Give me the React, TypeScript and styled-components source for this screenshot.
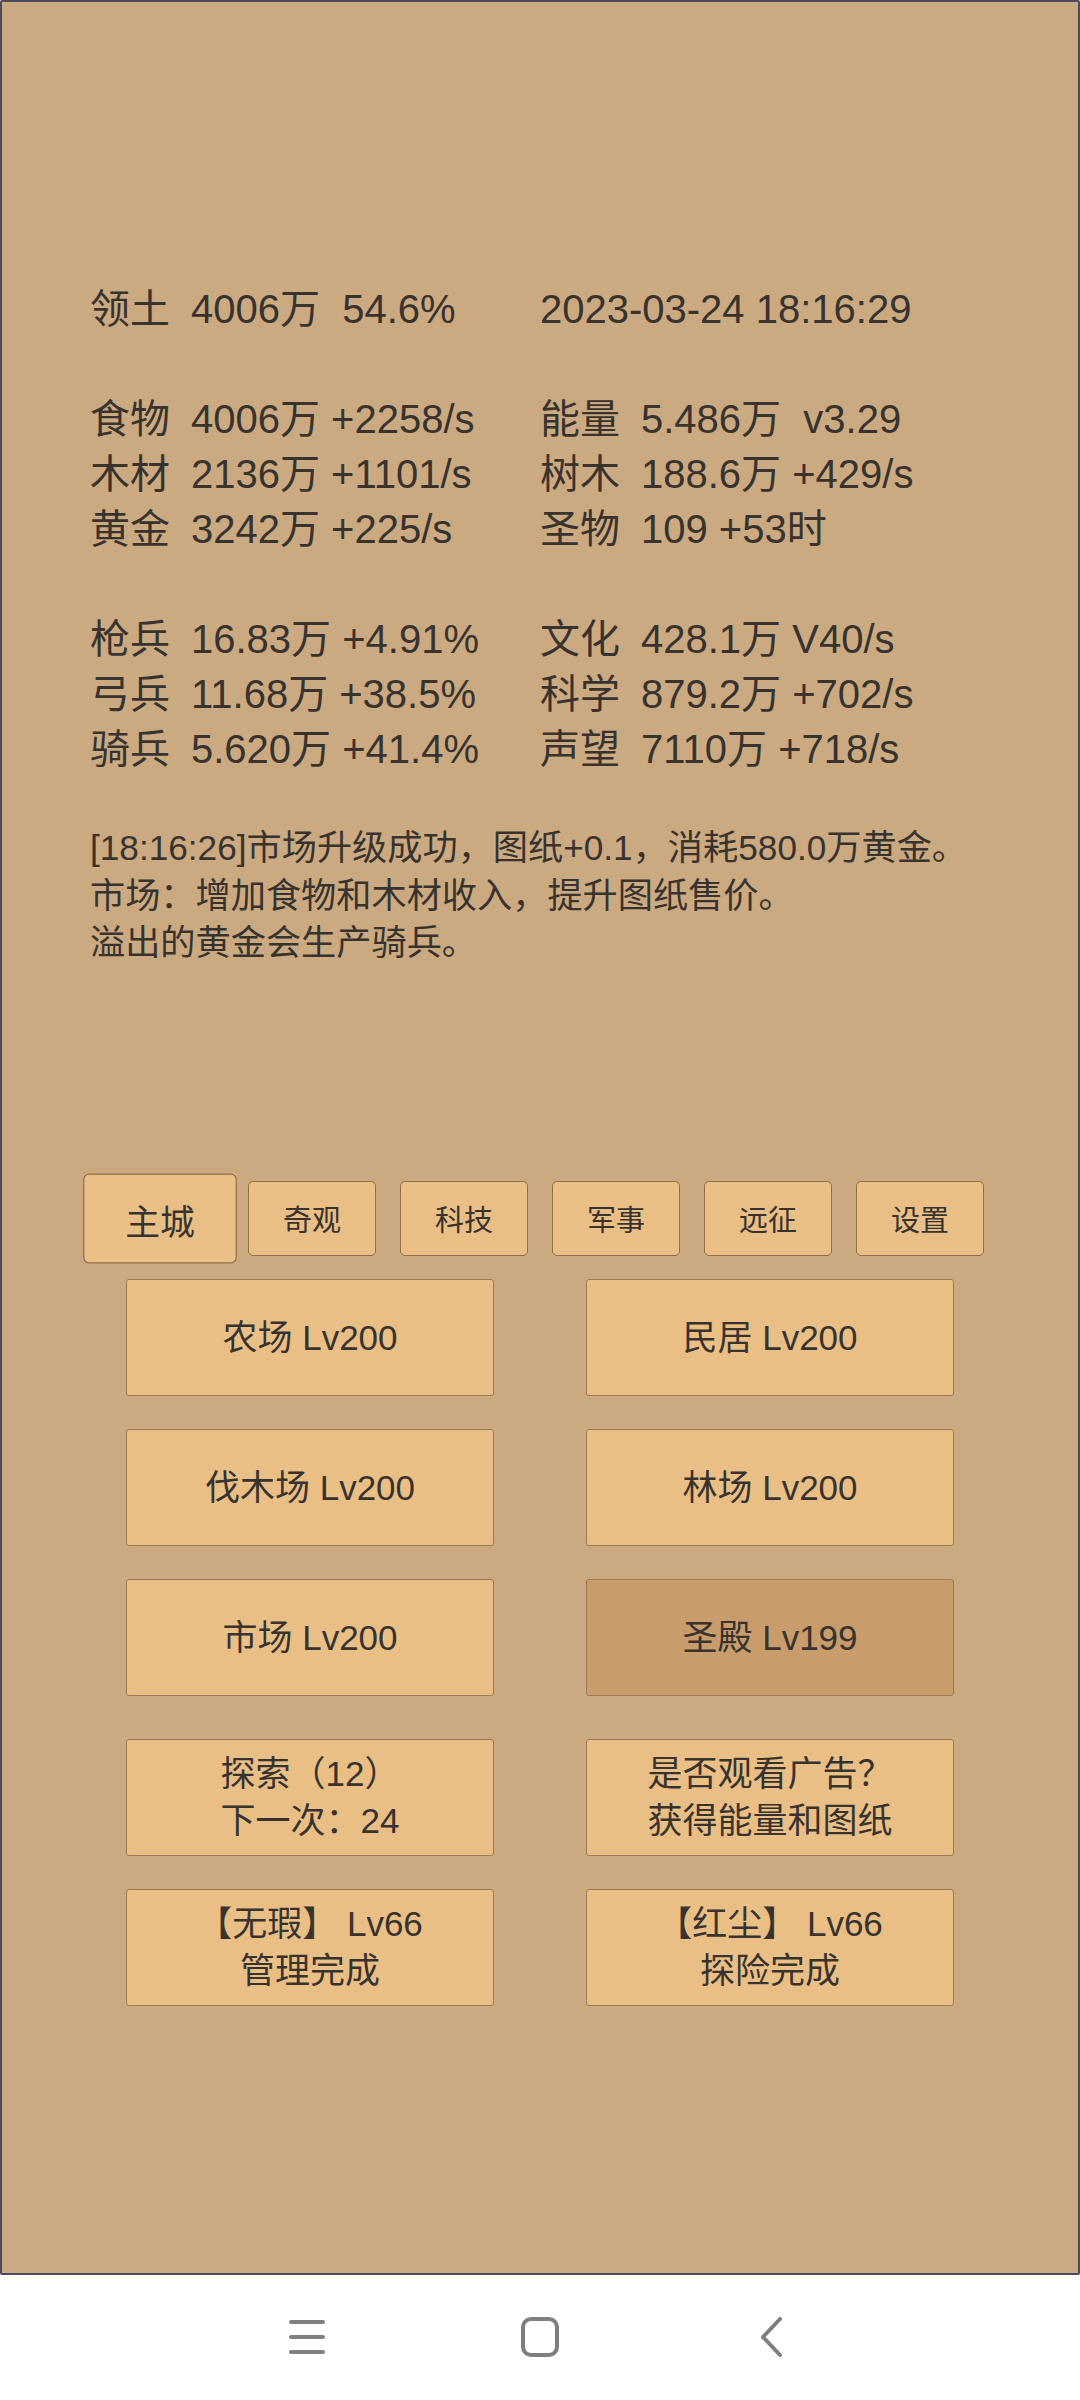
import React from "react";
import styled, {createGlobalStyle} from 'styled-components'

const GlobalStyle = createGlobalStyle`
    body {
        margin: 0;
        background: #ffffff;
        font-family: "Liberation Sans", "Noto Sans CJK SC", sans-serif;
    }
`

const Screen = styled.div`
    width: 1080px;
    height: 2400px;
    display: flex;
    flex-direction: column;
    background: #ffffff;
`

const Panel = styled.div`
    height: 2275px;
    box-sizing: border-box;
    border: 2px solid #4b4b5d;
    border-radius: 2px;
    background: #cbaa81;
    color: #38332e;
    padding-top: 280px;
    display: flex;
    flex-direction: column;
`

const Stats = styled.div`
    padding-left: 88px;
    font-size: 40px;
    line-height: 55px;
`

const StatRow = styled.div`
    display: grid;
    grid-template-columns: 450px 1fr;
    height: 55px;
    white-space: pre;
`

const Blank = styled.div`
    height: 55px;
`

const Cell = styled.div`
    display: flex;
    white-space: pre;
`

const Label = styled.span`
    width: 101px;
    flex: none;
`

const Log = styled.div`
    margin-top: 47px;
    padding-left: 88px;
    font-size: 35.2px;
    line-height: 47.5px;
`

const Tabs = styled.div`
    margin-top: 214px;
    display: flex;
    justify-content: center;
    gap: 24px;
`

const Tab = styled.div<{ active?: boolean }>`
    width: 128px;
    height: 75px;
    box-sizing: border-box;
    background: #eabf86;
    border: 1.5px solid #8f6d48;
    border-radius: 5px;
    display: flex;
    align-items: center;
    justify-content: center;
    font-size: 29px;
    transform: ${props => props.active ? `scale(1.2)` : `none`};
`

const Grid = styled.div<{ gapTop: number }>`
    margin: ${props => props.gapTop}px 78px 0;
    display: grid;
    grid-template-columns: 460px 460px;
    row-gap: 33px;
`

const Building = styled.div<{ busy?: boolean }>`
    width: 368px;
    height: 117px;
    margin: 0 auto;
    box-sizing: border-box;
    background: ${props => props.busy ? `#c99d6b` : `#eabf86`};
    border: 1.5px solid #9b7a55;
    border-radius: 3px;
    display: flex;
    flex-direction: column;
    align-items: center;
    justify-content: center;
    text-align: center;
    font-size: 35px;
    line-height: 47px;
`

const NavBar = styled.div`
    flex: 1;
    display: flex;
    align-items: center;
    justify-content: center;
    gap: 195px;
    padding-bottom: 2px;
`

const NavIcon = styled.svg`
    width: 40px;
    height: 40px;
    display: block;
`

const stats = [
    [["食物", "4006万 +2258/s"], ["能量", "5.486万  v3.29"]],
    [["木材", "2136万 +1101/s"], ["树木", "188.6万 +429/s"]],
    [["黄金", "3242万 +225/s"], ["圣物", "109 +53时"]],
    null,
    [["枪兵", "16.83万 +4.91%"], ["文化", "428.1万 V40/s"]],
    [["弓兵", "11.68万 +38.5%"], ["科学", "879.2万 +702/s"]],
    [["骑兵", "5.620万 +41.4%"], ["声望", "7110万 +718/s"]],
]

const tabs = ["主城", "奇观", "科技", "军事", "远征", "设置"]

const buildings = [
    {name: "农场 Lv200"}, {name: "民居 Lv200"},
    {name: "伐木场 Lv200"}, {name: "林场 Lv200"},
    {name: "市场 Lv200"}, {name: "圣殿 Lv199", busy: true},
]

export default function App() {
    return (
        <Screen>
            <GlobalStyle/>
            <Panel>
                <Stats>
                    <StatRow>
                        <Cell><Label>领土</Label>4006万  54.6%</Cell>
                        <Cell>2023-03-24 18:16:29</Cell>
                    </StatRow>
                    <Blank/>
                    {stats.map((row, i) => row ? (
                        <StatRow key={i}>
                            {row.map(c => (
                                <Cell key={c[0]}><Label>{c[0]}</Label>{c[1]}</Cell>
                            ))}
                        </StatRow>
                    ) : <Blank key={i}/>)}
                </Stats>
                <Log>
                    <div>[18:16:26]市场升级成功，图纸+0.1，消耗580.0万黄金。</div>
                    <div>市场：增加食物和木材收入，提升图纸售价。</div>
                    <div>溢出的黄金会生产骑兵。</div>
                </Log>
                <Tabs>
                    {tabs.map((t, i) => <Tab key={t} active={i === 0}>{t}</Tab>)}
                </Tabs>
                <Grid gapTop={23}>
                    {buildings.map(b => <Building key={b.name} busy={b.busy}>{b.name}</Building>)}
                </Grid>
                <Grid gapTop={43}>
                    <Building><div>探索（12）</div><div>下一次：24</div></Building>
                    <Building><div>是否观看广告？</div><div>获得能量和图纸</div></Building>
                    <Building><div>【无瑕】 Lv66</div><div>管理完成</div></Building>
                    <Building><div>【红尘】 Lv66</div><div>探险完成</div></Building>
                </Grid>
            </Panel>
            <NavBar>
                <NavIcon viewBox="0 0 40 40">
                    <g stroke="#7f7f7f" strokeWidth="4" strokeLinecap="round">
                        <line x1="6" y1="5" x2="38" y2="5"/>
                        <line x1="6" y1="20" x2="38" y2="20"/>
                        <line x1="6" y1="35" x2="38" y2="35"/>
                    </g>
                </NavIcon>
                <NavIcon viewBox="0 0 40 40">
                    <rect x="3" y="2" width="34" height="36" rx="8" fill="none" stroke="#7f7f7f" strokeWidth="4"/>
                </NavIcon>
                <NavIcon viewBox="0 0 40 40">
                    <path d="M25 2 L8 20 L25 38" fill="none" stroke="#7f7f7f" strokeWidth="4" strokeLinecap="round" strokeLinejoin="round"/>
                </NavIcon>
            </NavBar>
        </Screen>
    )
}
